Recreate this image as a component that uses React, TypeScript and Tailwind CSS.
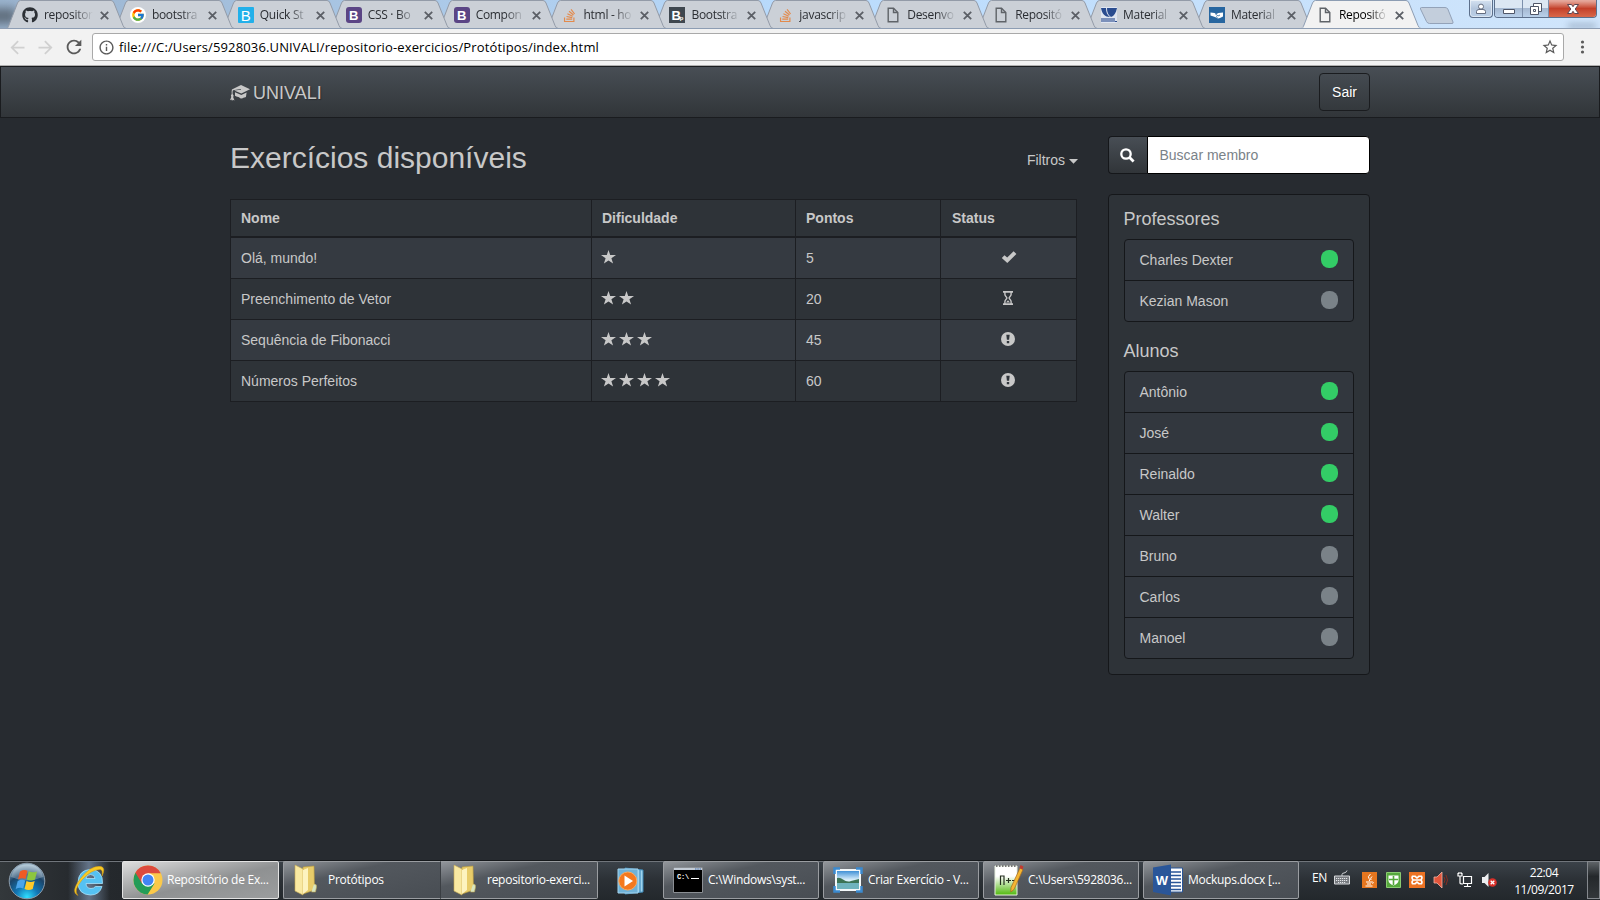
import React from "react";
import { FaGithub, FaStackOverflow } from "react-icons/fa";
import { FcGoogle } from "react-icons/fc";
import { MdArrowBack, MdArrowForward, MdInfoOutline, MdRefresh, MdStarBorder } from "react-icons/md";

/* ---------- Favicons ---------- */

const PageIcon = () => (
  <svg width="16" height="16" viewBox="0 0 16 16" fill="none" stroke="#5f6368" strokeWidth="1.4">
    <path d="M3.2 1.2h5.3l4.3 4.3v9.3H3.2z" />
    <path d="M8.5 1.2v4.3h4.3" />
  </svg>
);

const LetterIcon = ({ tone }: { tone: "cyan" | "purple" | "dark" }) => {
  const tones = {
    cyan: "bg-[#22b0ea] text-[15px] font-normal rounded-[1px]",
    purple: "bg-[#5b4585] text-[13px] font-bold rounded-[3px]",
    dark: "bg-[#3f474f] text-[13px] font-bold",
  };
  return (
    <span
      className={`flex h-4 w-4 items-center justify-center font-['Liberation_Sans',sans-serif] leading-none text-white ${tones[tone]}`}
    >
      B{tone === "dark" && <span className="-ml-px mt-1.5 text-[6px]">p</span>}
    </span>
  );
};

const UnivaliIcon = () => (
  <svg width="16" height="16" viewBox="0 0 16 16">
    <path d="M0 0h16v16H0z" fill="#dfe5f0" />
    <path d="M0 1h5c0 4 1 7 4 9C4 10 1 7 0 1z" fill="#2a4c8f" />
    <path d="M6 1h10c-1 5-3 8-6 9C7 8 6 5 6 1z" fill="#2a4c8f" />
    <path d="M1 11v4M3 11v4M5 11v4M7 11v4M9 11v4M11 11v4M13 11v4M14 14.5h2" stroke="#2a4c8f" strokeWidth="1.1" />
  </svg>
);

const MaterialIcon = () => (
  <svg width="16" height="16" viewBox="0 0 16 16">
    <path d="M0 0h16v16H0z" fill="#2766a0" />
    <path d="M1.500 5.500l4 .5 2 1 2-1 4.500-.5v4l-3 1.500-2 .5-3-1.500-4.500-1.500z" fill="#fff" />
    <path d="M6 6.500l3 2.500 2-1M7 9.500l1.500 1" stroke="#2766a0" strokeWidth=".8" fill="none" />
  </svg>
);

const StackIcon = () => <FaStackOverflow size={15} color="#e38a4c" />;

type TabData = { title: string; icon: React.ReactNode; active?: boolean };

const tabs: TabData[] = [
  { title: "repositor", icon: <FaGithub size={16} color="#2b2f34" /> },
  { title: "bootstra", icon: <span className="rounded-full bg-white p-px"><FcGoogle size={14} /></span> },
  { title: "Quick St", icon: <LetterIcon tone="cyan" /> },
  { title: "CSS · Bo", icon: <LetterIcon tone="purple" /> },
  { title: "Compon", icon: <LetterIcon tone="purple" /> },
  { title: "html - ho", icon: <StackIcon /> },
  { title: "Bootstra", icon: <LetterIcon tone="dark" /> },
  { title: "javascrip", icon: <StackIcon /> },
  { title: "Desenvo", icon: <PageIcon /> },
  { title: "Repositó", icon: <PageIcon /> },
  { title: "Material", icon: <UnivaliIcon /> },
  { title: "Material", icon: <MaterialIcon /> },
  { title: "Repositó", icon: <PageIcon />, active: true },
];

/* ---------- Browser chrome ---------- */

const Tab = ({ tab, order }: { tab: TabData; order: number }) => (
  <div className="relative -mr-[13.1px] h-[29px] w-[121px] shrink-0" style={{ zIndex: tab.active ? 40 : 30 - order }}>
    <svg className="absolute inset-0" width="121" height="29" viewBox="0 0 121 29">
      <path
        d="M0 28.500C2 28.500 2 27 3 25L11.500 3Q12.500 .5 14.500 .5H105Q107 .5 108 3L117 25.500Q118 28.500 120.500 28.500"
        fill={tab.active ? "#f2f2f2" : "#cbd0d7"}
        stroke={tab.active ? "#8d9db3" : "#939ba8"}
      />
      {tab.active && <path d="M1 28.500H120" stroke="#f2f2f2" strokeWidth="1.5" />}
    </svg>
    <div className="relative flex h-[29px] items-center pl-4 pt-px">
      <span className="flex w-4 justify-center">{tab.icon}</span>
      <span
        className={`ml-[6px] w-[49px] whitespace-nowrap text-xs tracking-[-0.3px] [mask-image:linear-gradient(to_right,#000_60%,transparent)] ${
          tab.active ? "text-black" : "text-[#2b2e33]"
        }`}
      >
        {tab.title}
      </span>
      <svg className="ml-[7px]" width="9" height="9" viewBox="0 0 9 9" stroke="#5b5f66" strokeWidth="1.8">
        <path d="M.8.8l7.400 7.400M8.200.8L.8 8.200" />
      </svg>
    </div>
  </div>
);

const WindowButtons = () => (
  <div className="absolute right-[3px] top-0 flex h-[18px]">
    <div className="mr-px flex w-[24px] items-center justify-center rounded-b-[4px] border border-t-0 border-[#5c6f8b] bg-linear-to-b from-[#d5e2f1] via-[#b4c6dd] to-[#b9cee6] shadow-[inset_0_0_0_1px_rgba(255,255,255,.5)]">
      <svg width="12" height="12" viewBox="0 0 12 12" fill="#fff" stroke="#646d80">
        <path d="M1.500 10.500V8.500Q1.500 6.500 4 6.500H8Q10.500 6.500 10.500 8.500V10.500z" />
        <circle cx="6" cy="3.600" r="2.500" />
      </svg>
    </div>
    <div className="flex overflow-hidden rounded-b-[4px] border border-t-0 border-[#5c6f8b]">
      <div className="flex w-[28px] items-center justify-center border-r border-[#7d90ac] bg-linear-to-b from-[#dce7f3] from-45% via-[#a5b8d1] via-50% to-[#b9d0ea]">
        <svg width="14" height="14" viewBox="0 0 14 14">
          <path d="M1.500 7.500h11v4h-11z" fill="#fff" stroke="#4f5668" />
        </svg>
      </div>
      <div className="flex w-[26px] items-center justify-center border-r border-[#7d90ac] bg-linear-to-b from-[#dce7f3] from-45% via-[#a5b8d1] via-50% to-[#b9d0ea]">
        <svg width="14" height="14" viewBox="0 0 14 14" fill="#fff" stroke="#4f5668">
          <path d="M4.500 1.500h8v8h-8z" />
          <path d="M1.500 4.500h8v8h-8z" />
          <path d="M4.500 7.500h2v2h-2z" />
        </svg>
      </div>
      <div className="flex w-[47px] items-center justify-center bg-linear-to-b from-[#e5a79b] from-5% via-[#c3402a] via-50% to-[#d9674a]">
        <svg width="14" height="14" viewBox="0 0 14 14">
          <path d="M1.500 2.500h4L7 4.700l1.500-2.200h4L9.200 7l3.300 4.500h-4L7 9.300l-1.500 2.200h-4L4.800 7z" fill="#fff" stroke="#5d4450" />
        </svg>
      </div>
    </div>
  </div>
);

const BrowserChrome = () => (
  <div className="relative h-[66px] font-['Open_Sans','Noto_Sans',sans-serif]">
    <div className="relative h-[29px] overflow-hidden border-b border-[#8d9db3] bg-linear-to-r from-[#9bb4cf] via-[#b9dbfd] via-50% to-[#d0e5fb]">
      <div className="absolute -left-3 top-2 h-4 w-7 bg-[#49525c]/70 blur-[5px]" />
      <div className="absolute bottom-0 right-1 h-1 w-7 bg-[#5d7088]/50 blur-[3px]" />
      <div className="flex pl-[6px]">
        {tabs.map((tab, i) => (
          <Tab key={i} tab={tab} order={i} />
        ))}
        <svg className="relative ml-[10px] mt-[6px]" width="36" height="19" viewBox="0 0 36 19">
          <path d="M2.500 1.500H26Q28 1.500 28.800 3L34 16Q34.500 17.500 33 17.500H10.500Q8.500 17.500 7.500 15.500L1.500 3Q1 1.500 2.500 1.500z" fill="#c3cedc" stroke="#93a2b8" />
        </svg>
      </div>
      <WindowButtons />
    </div>
    <div className="flex h-[37px] items-center border-b border-[#b0b0b0] bg-[#f2f2f2] pl-[7px]">
      <MdArrowBack size={21} color="#d0d0d0" />
      <MdArrowForward className="ml-[7px]" size={21} color="#d0d0d0" />
      <MdRefresh className="ml-[7px]" size={22} color="#5a5a5a" />
      <div className="ml-[7px] flex h-[28px] w-[1472px] items-center rounded-[3px] border border-[#a9a9a9] bg-white pl-[5px] pr-[4px]">
        <MdInfoOutline size={17} color="#5a5a5a" />
        <span className="ml-[4px] mt-px whitespace-nowrap text-[13px] tracking-[0.14px] text-black">
          file:///C:/Users/5928036.UNIVALI/repositorio-exercicios/Protótipos/index.html
        </span>
        <MdStarBorder className="ml-auto" size={18} color="#5a5a5a" />
      </div>
      <svg className="ml-[16px]" width="5" height="14" viewBox="0 0 5 14" fill="#5a5a5a">
        <circle cx="2.500" cy="2" r="1.600" />
        <circle cx="2.500" cy="7" r="1.600" />
        <circle cx="2.500" cy="12" r="1.600" />
      </svg>
    </div>
  </div>
);

/* ---------- Page ---------- */

const Star = () => (
  <svg width="15" height="14" viewBox="0 0 15 14" fill="#c8c8c8">
    <path d="M7.500 0L9.200 5.100H15L10.400 8.300 12.100 13.600 7.500 10.400 2.900 13.600 4.600 8.300 0 5.100H5.800z" />
  </svg>
);

const StatusIcon = ({ status }: { status: string }) => {
  if (status === "done")
    return (
      <svg width="16" height="14" viewBox="0 0 16 14" fill="#c8c8c8">
        <path d="M12.600 1.300L15.400 4 6.300 13.100.8 8l2.700-2.700 2.700 2.300z" />
      </svg>
    );
  if (status === "pending")
    return (
      <svg className="mr-px" width="10" height="14" viewBox="0 0 10 14" fill="none" stroke="#c8c8c8">
        <path d="M0 .9h10M0 13.100h10" strokeWidth="1.800" />
        <path d="M1.900 1v2.500C1.900 5.300 3.900 6 3.900 7S1.900 8.700 1.900 10.500V13M8.100 1v2.500C8.100 5.300 6.100 6 6.100 7s2 1.700 2 3.500V13" strokeWidth="1.400" />
        <path d="M3 11.500h4L5 9.300z" fill="#c8c8c8" stroke="none" />
      </svg>
    );
  return (
    <svg className="mr-px" width="14" height="14" viewBox="0 0 14 14">
      <circle cx="7" cy="7" r="7" fill="#c8c8c8" />
      <path d="M5.300 2.700h3.400L8.100 7.800H5.900zM5.800 9h2.400v2.300H5.800z" fill="#30353b" />
    </svg>
  );
};

const exercises = [
  { name: "Olá, mundo!", stars: 1, points: 5, status: "done" },
  { name: "Preenchimento de Vetor", stars: 2, points: 20, status: "pending" },
  { name: "Sequência de Fibonacci", stars: 3, points: 45, status: "open" },
  { name: "Números Perfeitos", stars: 4, points: 60, status: "open" },
];

const headings = [
  { label: "Nome", pad: "pl-[10px]" },
  { label: "Dificuldade", pad: "pl-[10px]" },
  { label: "Pontos", pad: "pl-[10px]" },
  { label: "Status", pad: "pl-[11px]" },
];

const ExerciseTable = () => (
  <div className="grid grid-cols-[360px_203px_144px_135px] gap-px border border-[#1c1e22] bg-[#1c1e22]">
    {headings.map((h) => (
      <div key={h.label} className={`mb-px flex h-[36px] items-center bg-[#2e3338] font-bold ${h.pad}`}>
        {h.label}
      </div>
    ))}
    {exercises.map((e, i) => {
      const cell = `flex h-[40px] items-center ${i % 2 ? "bg-[#2e3338]" : "bg-[#353a41]"}`;
      return (
        <React.Fragment key={e.name}>
          <div className={`${cell} pl-[10px]`}>{e.name}</div>
          <div className={`${cell} gap-[3px] pb-[2px] pl-[9px]`}>
            {Array.from({ length: e.stars }, (_, s) => (
              <Star key={s} />
            ))}
          </div>
          <div className={`${cell} pl-[10px]`}>{e.points}</div>
          <div className={`${cell} justify-center pb-[2px]`}>
            <StatusIcon status={e.status} />
          </div>
        </React.Fragment>
      );
    })}
  </div>
);

const MemberList = ({ title, members }: { title: string; members: { name: string; online: boolean }[] }) => (
  <section>
    <h4 className="-ml-[0.5px] mb-[10px] h-[19px] text-lg leading-[19px]">{title}</h4>
    <ul className="divide-y divide-[#15171a] rounded-[4px] border border-[#15171a] bg-[#32373e]">
      {members.map((m) => (
        <li key={m.name} className="flex h-[41px] items-center justify-between pl-[14.5px] pr-[15px] last:h-[40px]">
          {m.name}
          <span className={`mb-[3px] h-[18px] w-[17px] rounded-[8px] ${m.online ? "bg-[#33cc66]" : "bg-[#7a8288]"}`} />
        </li>
      ))}
    </ul>
  </section>
);

const Page = () => (
  <div className="h-[794px] bg-[#272b30] font-['Liberation_Sans',Arial,sans-serif] text-sm leading-5 text-[#c8c8c8]">
    <nav className="flex h-[52px] items-center justify-center border border-[#1a1c1f] bg-linear-to-b from-[#484e55] via-[#3a3f44] via-60% to-[#313539]">
      <div className="flex w-[1140px] items-center justify-between">
        <a className="flex items-center pt-[2px] text-lg [text-shadow:1px_1px_1px_rgba(0,0,0,.3)]">
          <svg width="20" height="17" viewBox="0 0 20 17" fill="#c8c8c8">
            <path d="M11 0L20 4.300 11.300 8.600 4.300 5.500 11 4.700 10.800 4.100 3 5.300Q2.300 6.500 2.600 9L3.600 10.500 3.200 12.300 4.500 15.500 2.800 14.800 2 16 1.600 14.500 0 15.300 1.300 12 .9 10.500 1.700 9Q1.500 6 1.900 4.400z" />
            <path d="M5 7.200L11.300 10l5.300-2.500-.6 4.200q-.5 1-2 .7-2 1.500-3.700.9-1.500-2-3.300-1.600L5 10.800z" />
          </svg>
          <span className="ml-[3px]">UNIVALI</span>
        </a>
        <button className="h-[38px] w-[51px] rounded-[4px] border border-[#1a1c1f] text-white [text-shadow:1px_1px_1px_rgba(0,0,0,.3)]">
          Sair
        </button>
      </div>
    </nav>
    <div className="mx-auto flex w-[1140px] gap-[31px] pt-[18px]">
      <main className="w-[847px]">
        <div className="flex h-[63px] items-start justify-between pt-[5px]">
          <h2 className="text-[30px] leading-[33px]">Exercícios disponíveis</h2>
          <a className="-mr-px mt-[9px] flex items-center">
            Filtros
            <svg className="ml-[4px] mt-[3px]" width="9" height="5" viewBox="0 0 9 5" fill="#c8c8c8">
              <path d="M0 0h9L4.500 4.700z" />
            </svg>
          </a>
        </div>
        <ExerciseTable />
      </main>
      <aside className="w-[262px]">
        <div className="mb-5 flex h-[38px]">
          <button className="flex w-[39px] items-center justify-center rounded-l-[4px] border border-r-0 border-[#15171a] bg-linear-to-b from-[#484e55] via-[#3a3f44] via-60% to-[#313539] pr-px">
            <svg width="15" height="15" viewBox="0 0 15 15" fill="none" stroke="#fff">
              <circle cx="6" cy="6" r="4.700" strokeWidth="2.300" />
              <path d="M9.600 9.600l4 4" strokeWidth="2.800" />
            </svg>
          </button>
          <div className="flex flex-1 items-center rounded-r-[4px] border border-black bg-white pl-[11.5px] text-[#7a8288]">
            Buscar membro
          </div>
        </div>
        <div className="flex flex-col gap-5 rounded-[4px] border border-[#15171a] bg-[#2e3338] p-[15px]">
          <MemberList
            title="Professores"
            members={[
              { name: "Charles Dexter", online: true },
              { name: "Kezian Mason", online: false },
            ]}
          />
          <MemberList
            title="Alunos"
            members={[
              { name: "Antônio", online: true },
              { name: "José", online: true },
              { name: "Reinaldo", online: true },
              { name: "Walter", online: true },
              { name: "Bruno", online: false },
              { name: "Carlos", online: false },
              { name: "Manoel", online: false },
            ]}
          />
        </div>
      </aside>
    </div>
  </div>
);

/* ---------- Taskbar ---------- */

const StartOrb = () => (
  <svg width="38" height="38" viewBox="0 0 38 38">
    <defs>
      <radialGradient id="orb" cx=".5" cy=".95" r=".9">
        <stop offset="0" stopColor="#2fe0ff" />
        <stop offset=".35" stopColor="#1277b5" />
        <stop offset=".7" stopColor="#1c4468" />
        <stop offset="1" stopColor="#9db9cb" />
      </radialGradient>
    </defs>
    <circle cx="19" cy="19" r="17.800" fill="url(#orb)" stroke="#8b9cab" />
    <path d="M3 15Q6 3 19 2.500T35 15Q19 22 3 15z" fill="#fff" opacity=".25" />
    <path d="M12 9.500q4-2.500 7.500-.8l-2 8.300q-3.500-1.700-7.500.5z" fill="#ee5a24" />
    <path d="M20.700 9.300q4 2 8.300.2l-2 8q-4.200 2-8.200-.1z" fill="#8cc63f" />
    <path d="M9.700 19q4-2.300 7.500-.5l-2 8q-3.500-1.700-7.500.6z" fill="#4ba4ea" />
    <path d="M18.500 18.900q4 2 8.200.1l-2 8q-4.200 2-8.200-.1z" fill="#ffca28" />
  </svg>
);

const IeIcon = () => (
  <svg width="32" height="32" viewBox="0 0 32 32">
    <path d="M29.500 18.500H13q.3 5 5 5 3 0 4.300-2H29q-2.500 8.500-11.500 8.500Q5 29.500 5 17.500 5.500 5 17.500 4.500 30 5 29.500 18.500zM13 13.500h9q-.4-4-4.500-4T13 13.500z" fill="#55c1f2" stroke="#a9e2fb" strokeWidth=".8" />
    <path d="M5 30.500Q-3 27 7.500 13.500T28 1.500q5 1.500 1 9.500 1-6.500-2-6.500Q18 4.500 9 15T5 30.500z" fill="#f8ca24" stroke="#d79b10" strokeWidth=".5" />
  </svg>
);

const ChromeIcon = () => (
  <svg width="30" height="30" viewBox="0 0 30 30">
    <circle cx="15" cy="15" r="14.500" fill="#fbc94a" />
    <path d="M15 15L2.400 7.800A14.500 14.500 0 0 0 14.600 29.500L21.500 18.500z" fill="#249c58" />
    <path d="M2.400 7.800A14.500 14.500 0 0 1 27.700 8.200H15L9 18.500z" fill="#dc4a3d" />
    <circle cx="15" cy="15" r="6.700" fill="#fff" />
    <circle cx="15" cy="15" r="5.500" fill="#4285f4" />
  </svg>
);

const FolderIcon = () => (
  <svg className="-ml-[6px]" width="24" height="32" viewBox="0 0 24 32">
    <path d="M9 3l11-1 .5 24L9 30z" fill="#e8cc6a" stroke="#b99a3e" strokeWidth=".6" />
    <path d="M1 1l8 4v26l-8-4z" fill="#f9e9a2" stroke="#c9ac52" strokeWidth=".6" />
    <path d="M9 6l5-2v22l-5 4z" fill="#fdf3c0" />
    <path d="M20 20q3 0 2.500 3l-1 5h-4" fill="#d8e6c0" stroke="#c0a650" strokeWidth=".6" />
  </svg>
);

const MediaIcon = () => (
  <svg width="27" height="28" viewBox="0 0 27 28">
    <path d="M8 1l18 2v22l-18 2z" fill="#9fd4ee" stroke="#3c87b5" />
    <path d="M1 2h20v24H1z" fill="#6fb2d8" stroke="#a6d5ee" />
    <path d="M23 3v22" stroke="#2f7fb4" />
    <circle cx="10.800" cy="14" r="9" fill="#f4791f" stroke="#fba85d" />
    <path d="M7.500 8.500v11l8.500-5.500z" fill="#fff" />
  </svg>
);

const CmdIcon = () => (
  <svg className="-ml-px" width="30" height="26" viewBox="0 0 30 26">
    <path d="M.5.500h29v25H.5z" fill="#000" stroke="#8b8f94" />
    <path d="M1 1h28v2H1z" fill="#c3cbd5" />
    <path d="M22 2h6" stroke="#3a6ab0" strokeDasharray="1.500 .8" />
    <text x="4" y="12" fill="#fff" fontSize="7" fontFamily="Liberation Mono" fontWeight="bold">C:\</text>
    <path d="M18 11.500h8" stroke="#fff" />
  </svg>
);

const ViewerIcon = () => (
  <svg className="-ml-px" width="30" height="26" viewBox="0 0 30 26">
    <defs>
      <linearGradient id="sky" x2="0" y2="1">
        <stop offset="0" stopColor="#2f86d2" />
        <stop offset=".5" stopColor="#dcf0fb" />
      </linearGradient>
    </defs>
    <path d="M3 3h24v20H3z" fill="url(#sky)" stroke="#f4f8fa" strokeWidth="2" />
    <path d="M4 11q3-1 6 1.500 4 3 8 1.500l8-2v5H4z" fill="#3c7355" />
    <path d="M4 16h22v6H4z" fill="#6fb3bd" />
    <path d="M1.500 7V1.500H7M23 1.500h5.500V7M28.500 19v5.500H23M7 24.500H1.500V19" fill="none" stroke="#3b8ad0" strokeWidth="2.500" />
  </svg>
);

const NotepadIcon = () => (
  <svg width="30" height="32" viewBox="0 0 30 32">
    <defs>
      <linearGradient id="npp" x2="0" y2="1">
        <stop offset=".35" stopColor="#fff" />
        <stop offset="1" stopColor="#4fb80c" />
      </linearGradient>
    </defs>
    <path d="M1 2h22v29H1z" fill="url(#npp)" stroke="#e8f0e0" />
    <path d="M2 2h20" stroke="#777" strokeWidth="2" strokeDasharray="1.500 1.500" />
    <path d="M6.500 21v-9h3.500v9M12 16.500h5M14.500 14v5M18 16.500h4" fill="none" stroke="#263020" strokeWidth="1.200" />
    <path d="M26 4l3 1.500-9 20-3.200 2.500.2-4.500z" fill="#f4b632" stroke="#a8691c" strokeWidth=".7" />
    <path d="M26.500 1l3 1.500-1 3-3-1.500z" fill="#c23b31" />
  </svg>
);

const WordIcon = () => (
  <svg className="-ml-px" width="30" height="32" viewBox="0 0 30 32">
    <path d="M15 4h14.500v24H15z" fill="#fff" stroke="#2a5699" />
    <path d="M17 8h11M17 11.500h11M17 15h11M17 18.500h11M17 22h11M17 25.500h11" stroke="#2a5699" strokeWidth="1.400" />
    <path d="M0 3.500L18 .5v31L0 28z" fill="#2a5699" />
    <text x="2.800" y="20.500" fontSize="13" fontWeight="bold" fill="#fff" fontFamily="Liberation Sans">W</text>
  </svg>
);

const TaskButton = ({ icon, label, className = "" }: { icon: React.ReactNode; label: string; className?: string }) => (
  <div
    className={`flex h-[38px] items-center gap-[4px] overflow-hidden whitespace-nowrap rounded-[2px] border border-[#9a9da1] pl-[9px] text-xs tracking-[-0.26px] text-white ${className}`}
  >
    <span className="flex w-[31px] shrink-0 justify-center">{icon}</span>
    <span>{label}</span>
  </div>
);

const Tray = () => (
  <div className="flex h-[38px] flex-1 items-center text-xs text-white">
    <span className="mb-[5px] ml-[13px] w-[16px] tracking-[-0.3px]">EN</span>
    <svg className="mb-[6px] ml-[6px]" width="16" height="15" viewBox="0 0 16 15">
      <path d="M8 6V4.500Q8 3 10 3T13 .5" fill="none" stroke="#cfd2d6" />
      <path d="M.5 6h15v8H.5z" fill="#777b80" stroke="#d6d8db" />
      <path d="M2 8.500h12M2 10.500h12M4 12.500h8" stroke="#e3e5e8" strokeDasharray="1.200 .8" />
    </svg>
    <svg className="ml-[12px]" width="15" height="16" viewBox="0 0 15 16">
      <path d="M0 0h15v16H0z" fill="#e5761f" />
      <path d="M8.500 2Q5 5 7 6.500T7 9M10 4.500Q8 6 9 8M4 10h6.500q1.800.3 0 1.700M5 12h4M3.500 14h7" fill="none" stroke="#fff" />
    </svg>
    <svg className="ml-[9px]" width="15" height="16" viewBox="0 0 15 16">
      <path d="M.5.500h14v15H.5z" fill="#55a83c" stroke="#8acb72" />
      <path d="M2.500 3.500h10v5q0 3-5 5-5-2-5-5z" fill="#fff" />
      <path d="M7.500 4v9M3 7.500h9" stroke="#55a83c" strokeWidth="1.600" />
    </svg>
    <svg className="ml-[8px]" width="16" height="16" viewBox="0 0 16 16">
      <path d="M0 0h16v16H0z" fill="#ec7324" />
      <path d="M3.500 4.300h2.700L8 6l1.800-1.700h2.700q1.200 1.800-.6 3.700 1.800 1.900.6 3.700H9.800L8 10l-1.800 1.700H3.500Q2.300 9.900 4.100 8 2.300 6.100 3.500 4.300zM4.500 8h7" fill="none" stroke="#fff" strokeWidth="1.600" />
    </svg>
    <svg className="ml-[8px]" width="16" height="16" viewBox="0 0 16 16">
      <path d="M1 5h3l5-5v16l-5-5H1z" fill="#e2553b" stroke="#f3b3a5" strokeWidth=".8" />
      <path d="M11 5q2 3 0 6M13 3q3 5 0 10" fill="none" stroke="#842e22" />
    </svg>
    <svg className="ml-[8px]" width="16" height="16" viewBox="0 0 16 16">
      <path d="M6.500 4.500h8v7h-8z" fill="#2d3238" stroke="#fff" strokeWidth="1.200" />
      <path d="M10.500 12v2.500M7 14.500h7M1 1v3h4V1M3 4v7q0 1 3 1M2 0v2M4 0v2" fill="none" stroke="#fff" strokeWidth="1.200" />
    </svg>
    <svg className="ml-[8px]" width="17" height="16" viewBox="0 0 17 16">
      <path d="M1 5h2.500l4-4v14l-4-4H1z" fill="#eceef0" />
      <circle cx="11.500" cy="10.500" r="4.300" fill="#d8302a" />
      <path d="M9.700 8.700l3.600 3.600M13.300 8.700l-3.600 3.600" stroke="#fff" strokeWidth="1.300" />
    </svg>
    <div className="flex flex-1 flex-col items-center pl-[3px] pt-px leading-[17px] tracking-[-0.4px]">
      <span>22:04</span>
      <span>11/09/2017</span>
    </div>
    <div className="h-[38px] w-[13px] border border-[#84888d] bg-linear-to-b from-[#5f6468] via-[#24282b] via-40% to-[#33373a]" />
  </div>
);

const buttonTone = "bg-linear-to-br from-[#92969b] via-[#53585e] via-35% to-[#484d53]";

const Taskbar = () => (
  <footer className="flex h-[40px] items-start border-t border-[#15181b] bg-linear-to-b from-[#3c434a] via-[#2b3035] to-[#23282c] font-['Open_Sans','Noto_Sans',sans-serif] shadow-[inset_0_1px_0_#70757b]">
    <div className="flex h-[39px] w-[122px] items-center bg-linear-to-r from-[#33383b] via-[#272b2f] via-55% to-[#24282c] pl-[8px] shadow-[inset_0_1px_0_#70757b]">
      <StartOrb />
      <div className="ml-[22px] flex h-[39px] w-[42px] items-center justify-center bg-linear-to-r from-transparent via-[#73869f]/80 to-transparent pr-px">
        <IeIcon />
      </div>
    </div>
    <TaskButton
      className="w-[157px] border-[#e3e3e3] bg-linear-to-br from-[#dedede] via-[#8f9192] via-55% to-[#9b9d9e]"
      icon={<ChromeIcon />}
      label="Repositório de Ex..."
    />
    <div className="ml-1 flex">
      <TaskButton className={`w-[158px] rounded-r-none border-r-[#3a3e43] ${buttonTone}`} icon={<FolderIcon />} label="Protótipos" />
      <TaskButton className={`w-[157px] rounded-l-none border-l-0 pl-[11px] ${buttonTone}`} icon={<FolderIcon />} label="repositorio-exerci..." />
    </div>
    <div className="flex h-[39px] w-[65px] items-center justify-center pr-px pt-px">
      <MediaIcon />
    </div>
    <TaskButton className={`w-[156px] ${buttonTone}`} icon={<CmdIcon />} label="C:\Windows\syst..." />
    <TaskButton className={`ml-1 w-[156px] ${buttonTone}`} icon={<ViewerIcon />} label="Criar Exercício - V..." />
    <TaskButton className={`ml-1 w-[156px] ${buttonTone}`} icon={<NotepadIcon />} label="C:\Users\5928036..." />
    <TaskButton className={`ml-1 w-[156px] ${buttonTone}`} icon={<WordIcon />} label="Mockups.docx [..." />
    <Tray />
  </footer>
);

export default function App() {
  return (
    <div className="h-[900px] w-[1600px] overflow-hidden">
      <BrowserChrome />
      <Page />
      <Taskbar />
    </div>
  );
}
